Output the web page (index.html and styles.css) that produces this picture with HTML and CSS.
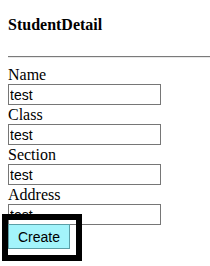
FILE: index.html
```html
<!DOCTYPE html>
<html lang="en">
<head>
    <meta charset="UTF-8">
    <meta name="viewport" content="width=device-width, initial-scale=1.0">
    <title>StudentDetail</title>
    <link rel="stylesheet" href="styles.css">
</head>
<body>
    <h4 class="title">StudentDetail</h4>
    <hr class="divider">

    <form class="student-form">
        <label class="field-label" for="name">Name</label>
        <input class="field-input" type="text" id="name" value="test">

        <label class="field-label" for="class">Class</label>
        <input class="field-input" type="text" id="class" value="test">

        <label class="field-label" for="section">Section</label>
        <input class="field-input" type="text" id="section" value="test">

        <label class="field-label" for="address">Address</label>
        <input class="field-input" type="text" id="address" value="test">

        <div class="focus-frame">
            <button class="create-btn" type="button">Create</button>
        </div>
    </form>
</body>
</html>
```

FILE: styles.css
```css
body {
    margin: 0;
    padding: 0 0 0 8px;
    font-family: "Liberation Serif", "Times New Roman", serif;
    font-size: 16px;
    color: #000;
    background: #fff;
}

.title {
    margin: 15px 0 22px;
    font-size: 16px;
    line-height: 19px;
    font-weight: bold;
}

.divider {
    margin: 0 0 7px;
    border: 0;
    border-top: 1px solid #7a7a7a;
    border-bottom: 1px solid #e8e8e8;
    height: 0;
}

.student-form {
    margin: 0;
}

.field-label {
    display: block;
    line-height: 19px;
}

.field-input {
    display: block;
    box-sizing: border-box;
    width: 153px;
    height: 21px;
    margin: 0;
    padding: 0 1px;
    border: 1px solid #767676;
    font-family: "Liberation Sans", Arial, sans-serif;
    font-size: 14px;
    color: #000;
}

.focus-frame {
    display: inline-block;
    margin: -11px 0 0 -6px;
    padding: 4px 6px 6px 0;
    border: 6px solid #000;
}

.create-btn {
    display: block;
    box-sizing: border-box;
    width: 62px;
    height: 25px;
    margin: 0;
    padding: 0;
    border: 1px solid #5c9ea6;
    background-color: #a3f4fb;
    font-family: "Liberation Sans", Arial, sans-serif;
    font-size: 14px;
    color: #000;
}
```
